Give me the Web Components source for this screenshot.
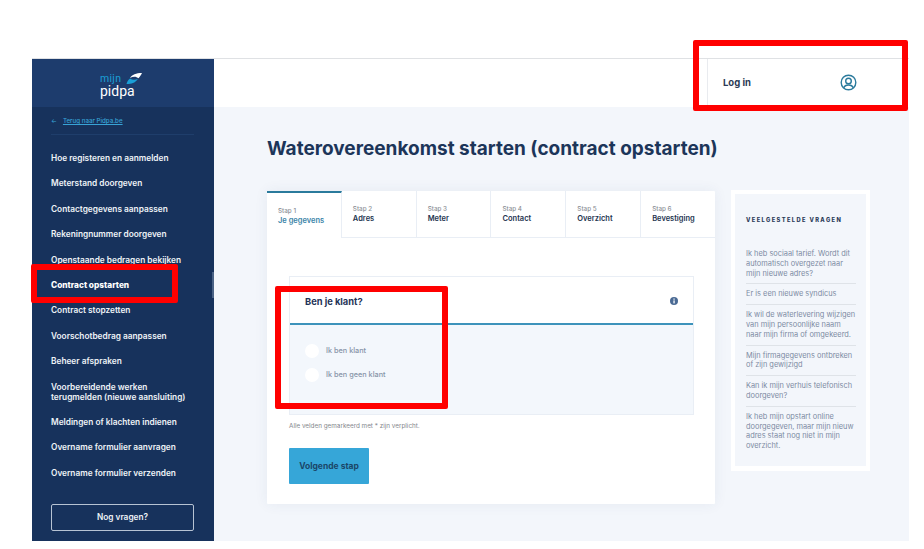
<!DOCTYPE html>
<html lang="nl"><head><meta charset="utf-8"><title>Pidpa</title>
<style>
html,body{margin:0;padding:0;background:#fff;}
body{width:924px;height:549px;overflow:hidden;font-family:Inter,"Liberation Sans",sans-serif;position:relative;}
</style></head><body>
<app-shell>
<side-bar slot="side"></side-bar>
<top-bar slot="top"></top-bar>
<h-title slot="main">Waterovereenkomst starten (contract opstarten)</h-title>
<form-card slot="main"></form-card>
<faq-box slot="main"></faq-box>
</app-shell>
<red-box style="left:693px;top:40px;width:215px;height:71px"></red-box>
<red-box style="left:31px;top:264px;width:147px;height:39px"></red-box>
<red-box style="left:275px;top:286px;width:173px;height:123px"></red-box>
<script>
function def(name,html){customElements.define(name,class extends HTMLElement{constructor(){super();this.attachShadow({mode:'open'}).innerHTML=html;}});}
def('red-box',`<style>:host{display:block;position:absolute;box-sizing:border-box;border:6px solid #f00;border-radius:2px;pointer-events:none}</style>`);
def('app-shell',`<style>
:host{display:block;padding:58px 15px 0 32px;width:877px;}
.line{height:1px;background:#dfe1e4}
.wrap{display:flex;height:482px;}
.col{flex:1;display:flex;flex-direction:column;min-width:0;background:#f3f6fb}
.main{display:grid;grid-template-columns:448px 139px;column-gap:16px;grid-template-rows:auto 1fr;padding:0 0 0 53px;align-content:start}
</style><div class="line"></div><div class="wrap"><slot name="side"></slot><div class="col"><slot name="top"></slot><div class="main"><slot name="main"></slot></div></div></div>`);
def('side-bar',`<style>
:host{display:flex;flex-direction:column;width:182px;background:#17325c;position:relative;flex:none;font-family:Inter,"Liberation Sans",sans-serif}
.head{height:48px;background:#1d3c6d;display:flex;justify-content:center;align-items:center}
.body{padding:0 20px 0 19px;display:flex;flex-direction:column;flex:1}
.back{display:flex;align-items:center;height:27px;font-size:6.200px;color:#38a3d6;gap:6px;border-bottom:1px solid #1f3e6b;}
.back u{font-weight:500}
ul{list-style:none;margin:18px 0 0;padding:0;font-size:8.300px;line-height:10px;font-weight:600;color:#eef2f7;display:flex;flex-direction:column;gap:15.400px}
li.on{font-weight:800;color:#fff}
.btn{box-sizing:border-box;height:27px;width:143px;margin-top:26px;border:1px solid #b7c3d3;border-radius:2px;display:flex;align-items:center;justify-content:center;font-size:8.300px;font-weight:600;color:#eef2f7}
.thumb{position:absolute;right:0;top:213px;width:2px;height:26px;background:#4a6285}
.logo{display:flex;flex-direction:column;align-items:flex-start;color:#fff;position:relative;width:42px;margin:5px 4px 0 0}
.mijn{color:#1a9fd6;font:400 10.500px/11px Roboto,sans-serif;letter-spacing:.3px}
.pid{font:400 14px/14px Roboto,sans-serif;letter-spacing:0}
svg{position:absolute;right:0;top:0}
</style>
<div class="head"><div class="logo"><span class="mijn">mijn</span><span class="pid">pidpa</span>
<svg width="16" height="11" viewBox="0 0 16 11"><path d="M4 5C6 1.500 10 0 16 0 15 2 14 3.500 12.500 5.300 10 3 7 3.300 4 5Z" fill="#fff"/><path d="M.5 11C1.200 8.500 2.300 6.800 4 5.500 6.500 7.200 9 7.200 12 5.800 10 9.300 6 11.300 .5 11Z" fill="#1a9fd6"/></svg></div></div>
<div class="body"><div class="back"><span>←</span><u>Terug naar Pidpa.be</u></div>
<ul><li>Hoe registeren en aanmelden</li><li>Meterstand doorgeven</li><li>Contactgegevens aanpassen</li><li>Rekeningnummer doorgeven</li><li>Openstaande bedragen bekijken</li><li class="on">Contract opstarten</li><li>Contract stopzetten</li><li>Voorschotbedrag aanpassen</li><li>Beheer afspraken</li><li>Voorbereidende werken<br>terugmelden (nieuwe aansluiting)</li><li>Meldingen of klachten indienen</li><li>Overname formulier aanvragen</li><li>Overname formulier verzenden</li></ul>
<div class="btn">Nog vragen?</div></div><div class="thumb"></div>`);
def('top-bar',`<style>
:host{display:flex;height:48px;background:#fff;justify-content:flex-end;font-family:Inter,"Liberation Sans",sans-serif}
.log{box-sizing:border-box;width:202px;border-left:1px solid #e9ebef;display:flex;align-items:center;padding-left:15px;gap:89px;font-size:9.500px;font-weight:700;color:#2b3a55;}
span{margin-top:-2px}
svg{display:block;margin-top:-1px}
</style><div class="log"><span>Log in</span><svg width="17" height="17" viewBox="0 0 17 17" fill="none" stroke="#2a7a9c" stroke-width="1.400"><circle cx="8.500" cy="8.500" r="7.300"/><circle cx="8.500" cy="7" r="2.800"/><path d="M3.700 14C4.500 11.500 6.500 11 8.500 11s4 .5 4.800 3"/></svg></div>`);
def('h-title',`<style>:host{display:block;grid-column:1/3;font:700 19px/24px Inter,"Liberation Sans",sans-serif;color:#1c3559;padding-top:30px;height:54px;white-space:nowrap}</style><slot></slot>`);
def('step-tab',`<style>
:host{display:block;box-sizing:border-box;height:47px;padding:14px 0 0 11px;border-right:1px solid #e9eef5;border-bottom:1px solid #e9eef5;font-family:Inter,"Liberation Sans",sans-serif;flex:1 1 0;overflow:hidden;white-space:nowrap}
:host([on]){border-top:2px solid #2a7a9c;border-bottom:0;padding-top:14px}
.a{font-size:6.300px;line-height:8px;color:#8b8f96;font-weight:500}
.b{font-size:7.500px;line-height:11px;font-weight:600;color:#24344f}
:host([on]) .b{color:#3a84a8}
</style><div class="a"><slot name="a"></slot></div><div class="b"><slot></slot></div>`);
def('radio-row',`<style>
:host{display:flex;align-items:center;gap:7px;height:14px;font:500 7.300px/14px Inter,"Liberation Sans",sans-serif;color:#8794a8}
i{width:14px;height:14px;border-radius:50%;background:#fff;display:block}
</style><i></i><slot></slot>`);
def('form-card',`<style>
:host{display:block;box-sizing:border-box;height:313px;background:#fff;border-radius:1px;box-shadow:0 0 14px rgba(40,70,120,.07);font-family:Inter,"Liberation Sans",sans-serif}
.tabs{display:flex}
.tabs step-tab:last-child{border-right:0}
.in{padding:38px 21px 0 22px}
.box{box-sizing:border-box;height:139px;border:1px solid #e9eef5;display:flex;flex-direction:column}
.hd{height:48px;box-sizing:border-box;border-bottom:2px solid #3d93bb;display:flex;align-items:center;justify-content:space-between;padding:2px 15px 0 15px;font-size:9.300px;font-weight:700;color:#1f3357;background:#fff;flex:none}
.bd{flex:1;background:#f3f7fc;padding:19px 15px 0;display:flex;flex-direction:column;gap:10px}
.note{font-size:6.350px;line-height:8px;color:#85888e;margin-top:7px}
.go{box-sizing:border-box;margin-top:18px;width:80px;height:36px;background:#36a6d8;border-radius:1px;display:flex;align-items:center;justify-content:center;font-size:8.500px;font-weight:700;color:#1b4668}
</style>
<div class="tabs"><step-tab on><span slot="a">Stap 1</span>Je gegevens</step-tab><step-tab><span slot="a">Stap 2</span>Adres</step-tab><step-tab><span slot="a">Stap 3</span>Meter</step-tab><step-tab><span slot="a">Stap 4</span>Contact</step-tab><step-tab><span slot="a">Stap 5</span>Overzicht</step-tab><step-tab><span slot="a">Stap 6</span>Bevestiging</step-tab></div>
<div class="in"><div class="box"><div class="hd"><span>Ben je klant?</span><svg width="8" height="8" viewBox="0 0 8 8"><circle cx="4" cy="4" r="4" fill="#4a6a94"/><rect x="3.400" y="3.400" width="1.300" height="3" fill="#fff"/><rect x="3.400" y="1.500" width="1.300" height="1.200" fill="#fff"/></svg></div>
<div class="bd"><radio-row>Ik ben klant</radio-row><radio-row>Ik ben geen klant</radio-row></div></div>
<div class="note">Alle velden gemarkeerd met * zijn verplicht.</div>
<div class="go">Volgende stap</div></div>`);
def('faq-box',`<style>
:host{display:block;box-sizing:border-box;height:281px;background:#f3f6fb;border:4px solid #fff;border-bottom-width:5px;margin-top:-1px;padding:22px 10px 0 11px;font-family:Inter,"Liberation Sans",sans-serif}
h4{margin:0 0 20px;font-size:5.700px;line-height:8px;letter-spacing:1.400px;font-weight:800;color:#2a3a58}
div{font-size:7.400px;line-height:9.850px;color:#7d8ba3;font-weight:400;padding:5px 0 4.900px;border-bottom:1px solid #dfe3e8;white-space:nowrap}
div:last-child{border:0}
</style><h4>VEELGESTELDE VRAGEN</h4>
<div>Ik heb sociaal tarief. Wordt dit<br>automatisch overgezet naar<br>mijn nieuwe adres?</div><div>Er is een nieuwe syndicus</div><div>Ik wil de waterlevering wijzigen<br>van mijn persoonlijke naam<br>naar mijn firma of omgekeerd.</div><div>Mijn firmagegevens ontbreken<br>of zijn gewijzigd</div><div>Kan ik mijn verhuis telefonisch<br>doorgeven?</div><div>Ik heb mijn opstart online<br>doorgegeven, maar mijn nieuw<br>adres staat nog niet in mijn<br>overzicht.</div>`);
</script></body></html>
